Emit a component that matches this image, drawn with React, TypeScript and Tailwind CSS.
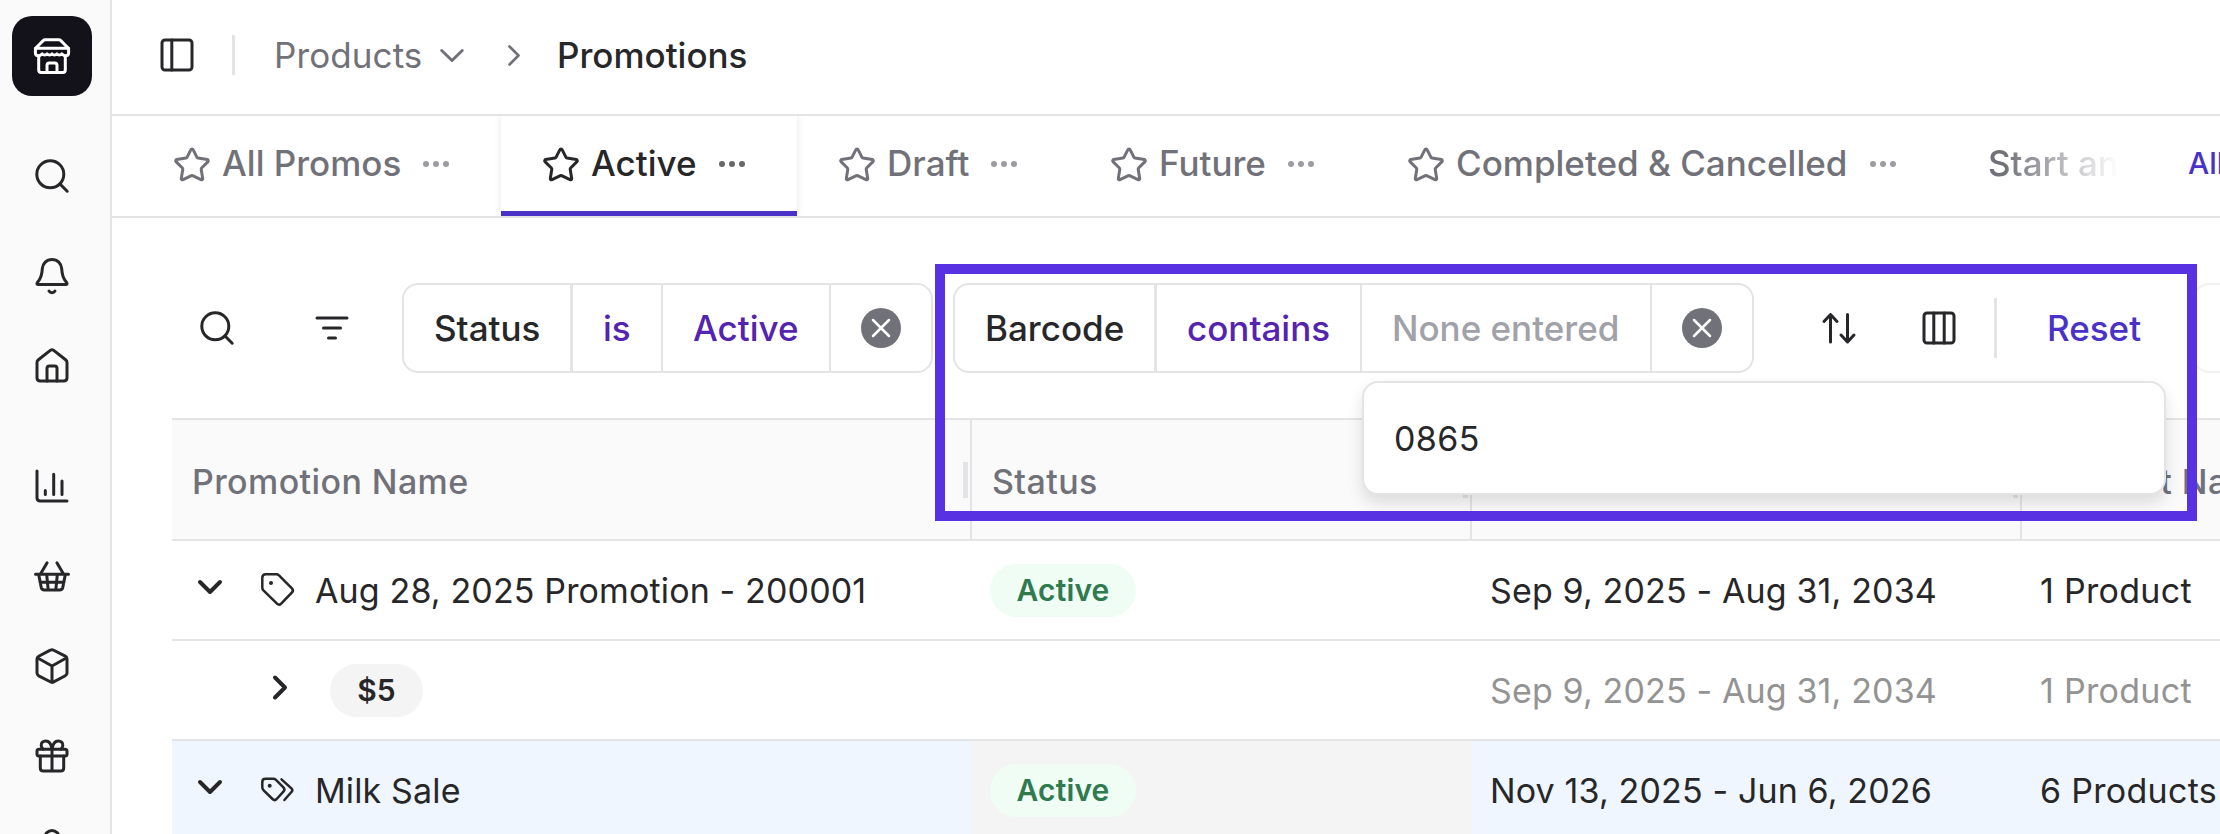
import type { ReactNode } from "react";
import clsx from "clsx";

interface IconProps {
  children: ReactNode;
  className?: string;
  stroke?: number;
}

// All icons are drawn on a 40x40 grid
function Icon({ children, className, stroke = 3 }: IconProps) {
  return (
    <svg
      viewBox="0 0 40 40"
      fill="none"
      stroke="currentColor"
      strokeWidth={stroke}
      strokeLinecap="round"
      strokeLinejoin="round"
      className={clsx("size-10 shrink-0", className)}
    >
      {children}
    </svg>
  );
}

const StoreIcon = () => (
  <Icon className="text-white">
    <path d="M3.6 12.2l7.6-7.6c.5-.5 1-.8 1.8-.8h14c.8 0 1.3.3 1.8.8l7.6 7.6z" />
    <path d="M3.4 12.2v4.6c0 2 1.5 3 3.2 3s2.7-1.1 3.6-1.9c1.3 1.6 3.7 1.6 4.9 0 1.3 1.6 3.6 1.6 4.9 0 1.3 1.6 3.6 1.6 4.9 0 1.2 1.6 3.6 1.6 4.9 0 .9.8 1.9 1.9 3.6 1.9s3.2-1 3.2-3v-4.6" />
    <path d="M6.7 20v14c0 1.6.9 2.5 2.5 2.5h21.6c1.6 0 2.5-.9 2.5-2.5V20" />
    <path d="M15 36.3v-7c0-1.5.8-2.3 2.3-2.3h5.4c1.5 0 2.3.8 2.3 2.3v7" />
  </Icon>
);

const SearchIcon = () => (
  <Icon>
    <circle cx="18.3" cy="18.3" r="13.5" />
    <path d="M28 28l7.2 7.2" />
  </Icon>
);

const BellIcon = () => (
  <Icon>
    <path d="M20 3.5c-5.5 0-9.3 4-9.7 9.2-.4 5.3-.5 7.4-3 11.1l-2 2.8c-.8 1.2-.2 1.9.9 1.9h27.6c1.1 0 1.7-.7.9-1.9l-2-2.8c-2.5-3.7-2.6-5.8-3-11.1-.4-5.2-4.2-9.2-9.7-9.2z" />
    <path d="M17 35c.6 1 1.7 1.7 3 1.7s2.4-.7 3-1.7" />
  </Icon>
);

const HomeIcon = () => (
  <Icon>
    <path d="M5 16.6c0-1.2.5-2.2 1.4-2.9L18.3 4.4c1-.8 2.3-.8 3.4 0l11.9 9.3c.9.7 1.4 1.7 1.4 2.9v15.1c0 2-1.3 3.3-3.3 3.3H8.3c-2 0-3.3-1.3-3.3-3.3z" />
    <path d="M15 35V22.3c0-1.5.8-2.3 2.3-2.3h5.4c1.5 0 2.3.8 2.3 2.3V35" />
  </Icon>
);

const ChartIcon = () => (
  <Icon>
    <path d="M5 5v26.7C5 33.7 6.3 35 8.3 35H35M13.3 24.5v4M21.7 8.3v20.2M30 15v13.5" />
  </Icon>
);

const BasketIcon = () => (
  <Icon>
    <path d="M3.5 18.3h33M8.5 18l6.6-11.3M31.5 18L24.9 6.7M6.7 18.6l2.5 12.7c.4 1.8 1.4 2.6 3.2 2.6h15.2c1.8 0 2.8-.8 3.2-2.6l2.5-12.7M14.7 18.6l1.5 15.2M25.3 18.6l-1.5 15.2M8 26.2h24" />
  </Icon>
);

const BoxIcon = () => (
  <Icon>
    <path d="M18.3 4.2c1.1-.6 2.3-.6 3.4 0l11.6 6c1.1.6 1.7 1.6 1.7 2.8v14c0 1.2-.6 2.2-1.7 2.8l-11.6 6c-1.1.6-2.3.6-3.4 0l-11.6-6C5.6 29.2 5 28.2 5 27V13c0-1.2.6-2.2 1.7-2.8z" />
    <path d="M5.7 12L20 20l14.3-8M20 20v16" />
  </Icon>
);

const GiftIcon = () => (
  <Icon>
    <rect x="5" y="13.3" width="30" height="6.7" rx="2" />
    <path d="M8.3 20v12c0 2 1 3.1 3.1 3.1h17.2c2.1 0 3.1-1.1 3.1-3.1V20M20 13.3V35" />
    <path d="M20 13.2c-.7-4.7-3-8.2-6.3-8.2-2.7 0-4.5 1.8-4.5 4.2 0 1.8.8 3.2 2 4M20 13.2c.7-4.7 3-8.2 6.3-8.2 2.7 0 4.5 1.8 4.5 4.2 0 1.8-.8 3.2-2 4" />
  </Icon>
);

const UserIcon = () => (
  <Icon>
    <circle cx="20" cy="11.7" r="7.2" />
    <path d="M6 35c1-7 7-10 14-10s13 3 14 10" />
  </Icon>
);

const StarIcon = () => (
  <Icon>
    <path d="M18.9 5.6a1.2 1.2 0 0 1 2.2 0L25 13.4q.3.6 1 .7l9.3 1.5a1.2 1.2 0 0 1 .7 2L29.6 24q-.5.5-.4 1.2l1.5 9.2a1.2 1.2 0 0 1-1.7 1.3L20.6 31.6q-.6-.3-1.2 0L11 35.7a1.2 1.2 0 0 1-1.7-1.3l1.5-9.2q.1-.7-.4-1.2L4 17.6a1.2 1.2 0 0 1 .7-2L14 14.1q.7-.1 1-.7z" />
  </Icon>
);

const TagIcon = () => (
  <Icon stroke={2.5}>
    <path d="M4.3 7.8c0-2.2 1.2-3.5 3.5-3.5h10.4c1.2 0 2 .3 2.8 1.1l12.9 12.9c1.3 1.3 1.3 2.9 0 4.2L23.2 33.6c-1.3 1.3-2.9 1.3-4.2 0L5.4 20.3c-.8-.8-1.1-1.6-1.1-2.8z" />
    <circle cx="13" cy="13" r="2" fill="currentColor" stroke="none" />
  </Icon>
);

const TagsIcon = () => (
  <Icon stroke={2.5}>
    <path d="M4.3 12c0-2 1.1-3.2 3.2-3.2h7.7c1.2 0 2 .3 2.8 1.1l7.4 7.5c1.3 1.3 1.3 2.9 0 4.2L18.7 29c-1.3 1.3-2.9 1.3-4.2 0l-9.1-8.9c-.8-.8-1.1-1.6-1.1-2.8z" />
    <path d="M23.5 9.3l9.9 9c1.3 1.2 1.3 2.5 0 3.7l-7 8" />
    <circle cx="11.7" cy="15.8" r="2" fill="currentColor" stroke="none" />
  </Icon>
);

const navIcons = [ChartIcon, BasketIcon, BoxIcon, GiftIcon, UserIcon];

const tabs = [
  { label: "All Promos", width: "w-[369px]" },
  { label: "Active", width: "w-[296px]", active: true },
  { label: "Draft", width: "w-[272px]" },
  { label: "Future", width: "w-[297px]" },
  { label: "Completed & Cancelled", width: "w-[582px]" },
];

const rows = [
  {
    name: "Aug 28, 2025 Promotion - 200001",
    icon: TagIcon,
    status: "Active",
    dates: "Sep 9, 2025 - Aug 31, 2034",
    products: "1 Product",
  },
  {
    discount: "$5",
    dates: "Sep 9, 2025 - Aug 31, 2034",
    products: "1 Product",
  },
  {
    name: "Milk Sale",
    icon: TagsIcon,
    status: "Active",
    dates: "Nov 13, 2025 - Jun 6, 2026",
    products: "6 Products",
    selected: true,
  },
];

function ClearButton() {
  return (
    <button className="flex h-full flex-1 items-center pl-[30px]">
      <span className="flex size-10 items-center justify-center rounded-full bg-[#71717a] text-white">
        <Icon stroke={2.5}>
          <path d="M12 12l16 16M28 12L12 28" />
        </Icon>
      </span>
    </button>
  );
}

function Sidebar() {
  return (
    <aside className="flex h-full w-28 shrink-0 flex-col items-center overflow-hidden border-r-2 border-[#e4e4e7] bg-[#fafafa] pt-4 pr-1.5">
      <div className="flex size-20 shrink-0 items-center justify-center rounded-[20px] bg-[#13111a]">
        <StoreIcon />
      </div>
      <div className="mt-[60px] flex flex-col items-center">
        <SearchIcon />
        <div className="h-[60px] shrink-0" />
        <BellIcon />
        <div className="h-[50px] shrink-0" />
        <HomeIcon />
      </div>
      <nav className="mt-20 flex flex-col items-center gap-[50px]">
        {navIcons.map((NavIcon, idx) => (
          <NavIcon key={idx} />
        ))}
      </nav>
    </aside>
  );
}

function Header() {
  return (
    <header className="flex h-[116px] shrink-0 items-center border-b-2 border-[#e4e4e7] pb-1 pl-[45px]">
      <Icon>
        <rect x="5" y="5" width="30" height="30" rx="3" />
        <path d="M14.8 5v30" />
      </Icon>
      <div className="ml-[35px] h-10 w-[3px] bg-[#e4e4e7]" />
      <span className="ml-[39px] w-[149px] text-[35px] tracking-[0.1px] text-[#71717a]">Products</span>
      <Icon className="ml-[9px] text-[#71717a]">
        <path d="M9.7 15.5L20 25.5l10.3-10" />
      </Icon>
      <Icon className="ml-[22px] text-[#71717a]" stroke={2.7}>
        <path d="M15.5 11.5l9 9-9 9" />
      </Icon>
      <span className="ml-[23px] text-[35px] font-medium">Promotions</span>
    </header>
  );
}

function TabBar() {
  return (
    <div className="flex h-[102px] shrink-0 overflow-hidden border-b-2 border-[#e4e4e7] pl-5 text-[#71717a]">
      {tabs.map((tab) => (
        <div
          key={tab.label}
          className={clsx(
            "flex h-[100px] shrink-0 items-center border-b-[5px] pr-[52px] pl-10 text-[35px] font-medium whitespace-nowrap",
            tab.width,
            tab.active
              ? "border-[#4a32c8] text-[#27272a] shadow-[0_0_8px_rgba(0,0,0,0.1)] [clip-path:inset(0_-10px)]"
              : "border-transparent"
          )}
        >
          <StarIcon />
          <span className="ml-2.5">{tab.label}</span>
          <span className="ml-auto flex gap-1 opacity-70">
            <i className="size-1.5 rounded-full bg-current" />
            <i className="size-1.5 rounded-full bg-current" />
            <i className="size-1.5 rounded-full bg-current" />
          </span>
        </div>
      ))}
      <div className="flex h-[95px] w-[174px] shrink-0 items-center pl-10 text-[35px] font-medium whitespace-nowrap [mask-image:linear-gradient(to_right,black_32%,transparent_98%)]">
        Start an
      </div>
      <div className="flex h-[95px] items-center pl-[66px] text-[30px] font-medium whitespace-nowrap text-[#4a32c8]">
        All
      </div>
    </div>
  );
}

function Toolbar() {
  return (
    <div className="flex h-[200px] shrink-0 items-center pt-5 pl-[85px] text-[35px] font-medium">
      <SearchIcon />
      <Icon className="ml-[75px]">
        <path d="M5 10h30M11.5 20h17M16.5 30h7" />
      </Icon>
      <div className="ml-[50px] flex h-[90px] w-[531px] shrink-0 items-center rounded-2xl border-2 border-[#e4e4e7]">
        <div className="flex h-full w-[169px] items-center border-r-3 border-[#e4e4e7] pl-[30px]">Status</div>
        <div className="flex h-full w-[90px] items-center border-r-2 border-[#e4e4e7] pl-[30px] text-[#5423b0]">is</div>
        <div className="flex h-full w-[168px] items-center border-r-2 border-[#e4e4e7] pl-[30px] text-[#5423b0]">Active</div>
        <ClearButton />
      </div>
      <div className="ml-5 flex h-[90px] w-[801px] shrink-0 items-center rounded-2xl border-2 border-[#e4e4e7]">
        <div className="flex h-full w-[202px] items-center border-r-3 border-[#e4e4e7] pl-[30px]">Barcode</div>
        <div className="flex h-full w-[205px] items-center border-r-2 border-[#e4e4e7] pl-[30px] text-[#5423b0]">contains</div>
        <div className="flex h-full w-[290px] items-center border-r-2 border-[#e4e4e7] pl-[30px] whitespace-nowrap text-[#a1a1aa]">
          None entered
        </div>
        <ClearButton />
      </div>
      <Icon className="ml-[65px]">
        <path d="M11.5 34V6.5M5 13.5l6.5-7 6.5 7M28.5 6.5V34M22 27l6.5 7 6.5-7" />
      </Icon>
      <Icon className="ml-[60px]">
        <rect x="5" y="5" width="30" height="30" rx="3" />
        <path d="M14.8 5v30M25.2 5v30" />
      </Icon>
      <div className="ml-[35px] h-[60px] w-[3px] shrink-0 bg-[#e4e4e7]" />
      <span className="ml-[50px] w-[92px] shrink-0 text-[#4a32c8]">Reset</span>
      <div className="ml-[54px] h-[90px] w-24 shrink-0 rounded-2xl border-2 border-[#e4e4e7] opacity-50" />
    </div>
  );
}

function ColumnHeader({ label, width }: { label?: string; width: string }) {
  return (
    <div className={clsx("flex shrink-0 items-center border-r-2 border-[#e4e4e7] pr-0.5 pl-5", width)}>
      <span className="mt-1">{label}</span>
      <span className="ml-auto h-9 w-[5px] bg-[#e4e4e7]" />
    </div>
  );
}

function PromotionsTable() {
  return (
    <div className="ml-15 flex w-[2200px] shrink-0 flex-col border-t-2 border-[#e4e4e7] text-[34px] tracking-[0.14px] whitespace-nowrap">
      <div className="flex h-[121px] border-b-2 border-[#e4e4e7] bg-[#fafafa] font-medium tracking-[0.4px] text-[#71717a]">
        <ColumnHeader label="Promotion Name" width="w-[800px]" />
        <ColumnHeader label="Status" width="w-[500px]" />
        <ColumnHeader width="w-[550px]" />
        <div className="flex items-center pl-5">
          <span className="mt-1">Product Name</span>
        </div>
      </div>
      {rows.map((row, idx) => (
        <div
          key={idx}
          className={clsx(
            "flex h-[100px] border-b-2 border-[#e4e4e7]",
            row.selected && "bg-[#eff6ff]"
          )}
        >
          <div className="flex w-[800px] items-center">
            {row.icon ? (
              <>
                <Icon className="-mt-1.5 ml-[18px]" stroke={4}>
                  <path d="M10 15l10 10 10-10" />
                </Icon>
                <span className="ml-7">
                  <row.icon />
                </span>
                <span className="ml-[17px]">{row.name}</span>
              </>
            ) : (
              <>
                <Icon className="-mt-1.5 ml-[88px]" stroke={4}>
                  <path d="M15 10.5l10 10-10 10" />
                </Icon>
                <span className="ml-[30px] flex h-[53px] w-[93px] items-center justify-center rounded-full bg-[#f4f4f5] text-[30px] font-semibold">
                  {row.discount}
                </span>
              </>
            )}
          </div>
          <div className={clsx("flex w-[500px] items-center pl-[18px]", row.selected && "bg-[#f4f4f5]")}>
            {row.status && (
              <span className="flex h-[53px] w-[146px] items-center justify-center rounded-full bg-[#effdf5] text-[30px] font-semibold text-[#2f7a4f]">
                {row.status}
              </span>
            )}
          </div>
          <div className={clsx("flex w-[550px] items-center pl-[18px]", row.discount && "text-[#939393]")}>
            {row.dates}
          </div>
          <div className={clsx("flex items-center pl-[18px] tracking-[0.3px]", row.discount && "text-[#939393]")}>
            {row.products}
          </div>
        </div>
      ))}
    </div>
  );
}

export default function App() {
  return (
    <div className="relative flex h-[834px] w-[2220px] overflow-hidden bg-white font-[Inter,sans-serif] text-[#27272a]">
      <Sidebar />
      <main className="flex min-w-0 flex-1 flex-col overflow-hidden">
        <Header />
        <TabBar />
        <Toolbar />
        <PromotionsTable />
      </main>

      {/* Barcode filter popover */}
      <div className="absolute top-[381px] left-[1362px] flex h-[114px] w-[804px] items-center rounded-2xl border-2 border-[#e4e4e7] bg-white pl-[30px] text-[34px] tracking-[0.4px] shadow-[0_8px_16px_rgba(0,0,0,0.12)]">
        0865
      </div>

      {/* Highlight around the barcode filter */}
      <div className="pointer-events-none absolute top-[264px] left-[935px] h-[257px] w-[1262px] border-[10px] border-[#5831e2]" />
    </div>
  );
}
